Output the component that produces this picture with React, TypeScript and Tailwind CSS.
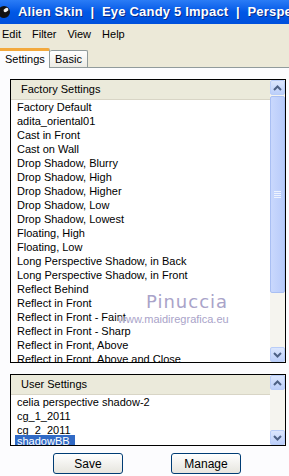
import React from 'react';

const factory = [
  'Factory Default',
  'adita_oriental01',
  'Cast in Front',
  'Cast on Wall',
  'Drop Shadow, Blurry',
  'Drop Shadow, High',
  'Drop Shadow, Higher',
  'Drop Shadow, Low',
  'Drop Shadow, Lowest',
  'Floating, High',
  'Floating, Low',
  'Long Perspective Shadow, in Back',
  'Long Perspective Shadow, in Front',
  'Reflect Behind',
  'Reflect in Front',
  'Reflect in Front - Faint',
  'Reflect in Front - Sharp',
  'Reflect in Front, Above',
  'Reflect in Front, Above and Close',
];

const user = ['celia perspective shadow-2', 'cg_1_2011', 'cg_2_2011'];

function Arrow({ up }: { up?: boolean }) {
  return (
    <svg width="9" height="6" viewBox="0 0 9 6">
      <path
        d={up ? 'M1 5 L4.5 1.5 L8 5' : 'M1 1 L4.5 4.5 L8 1'}
        fill="none"
        stroke="#4d6185"
        strokeWidth="2"
      />
    </svg>
  );
}

function ScrollBtn({ up }: { up?: boolean }) {
  return (
    <div className="h-[15px] w-[15px] flex items-center justify-center rounded-[2px] border border-[#b9cdf8] bg-gradient-to-b from-[#dbe6fd] to-[#bccffa]">
      <Arrow up={up} />
    </div>
  );
}

function Scrollbar({ thumb, track }: { thumb: number; track: number }) {
  return (
    <div className="w-[15px] flex flex-col bg-[#f4f3ee]">
      <ScrollBtn up />
      {thumb > 0 && (
        <div
          className="mt-[1px] w-[15px] rounded-[2px] border border-[#a9bff3] bg-gradient-to-r from-[#c9d8fd] to-[#b8cbfa] flex items-center justify-center"
          style={{ height: thumb }}
        >
          <div className="flex flex-col gap-[1px]">
            <div className="h-px w-[7px] bg-[#eef3fe]" />
            <div className="h-px w-[7px] bg-[#eef3fe]" />
            <div className="h-px w-[7px] bg-[#eef3fe]" />
            <div className="h-px w-[7px] bg-[#eef3fe]" />
          </div>
        </div>
      )}
      <div className="bg-[#f5f4ef]" style={{ height: track }} />
      <ScrollBtn />
    </div>
  );
}

export default function App() {
  return (
    <div className="relative w-[289px] h-[476px] overflow-hidden bg-[#ece9d8] text-[11px] text-black font-['Liberation_Sans',Arial,sans-serif]">
      {/* title bar */}
      <div className="h-[24px] flex items-center bg-gradient-to-b from-[#2a7cf6] via-[#0058e6] to-[#0050dc] whitespace-nowrap overflow-hidden">
        <svg width="14" height="14" viewBox="0 0 14 14" className="ml-[-3px] shrink-0">
          <circle cx="7" cy="7" r="6" fill="#111" />
          <ellipse cx="9" cy="5" rx="2.6" ry="1.8" fill="#eee" transform="rotate(-30 9 5)" />
        </svg>
        <span className="ml-[7px] text-white font-bold text-[13px] tracking-[0.2px] [text-shadow:1px_1px_0_#0a2a8a]">
          Alien Skin&nbsp;&nbsp;|&nbsp;&nbsp;Eye Candy 5 Impact&nbsp;&nbsp;|&nbsp;&nbsp;Perspective Shadow
        </span>
      </div>

      {/* menu */}
      <div className="h-[20px] flex items-center gap-[11px] pl-[2px]">
        <span>Edit</span>
        <span>Filter</span>
        <span>View</span>
        <span>Help</span>
      </div>

      {/* tabs */}
      <div className="h-[23px] flex items-end bg-[#ece9d8]">
        <div className="relative z-10 h-[20px] w-[50px] mb-[-1px] bg-[#fcfcfe] border-r border-[#919b9c] border-t-[3px] border-t-[#f3a93d] flex items-center pl-[5px] rounded-tr-[2px]">
          Settings
        </div>
        <div className="h-[17px] w-[38px] border border-b-0 border-l-0 border-[#919b9c] bg-gradient-to-b from-white to-[#ecebe5] flex items-center pl-[5px] rounded-t-[2px]">
          Basic
        </div>
      </div>

      {/* panel */}
      <div className="border-t border-[#919b9c] bg-[#fcfcfe] h-[409px] pt-[11px]">
        <div className="ml-[10px] w-[276px] h-[284px] border border-black flex bg-white">
          <div className="flex-1 flex flex-col overflow-hidden">
            <div className="h-[20px] shrink-0 bg-[#ebeadb] border-b border-[#d8d5c6] flex items-center pl-[10px]">
              Factory Settings
            </div>
            {factory.map(f => (
              <div key={f} className="h-[14px] shrink-0 leading-[14px] pl-[6px] whitespace-nowrap">
                {f}
              </div>
            ))}
          </div>
          <Scrollbar thumb={197} track={54} />
        </div>

        <div className="mt-[11px] ml-[10px] w-[276px] h-[72px] border border-black flex bg-white">
          <div className="flex-1 flex flex-col overflow-hidden">
            <div className="h-[20px] shrink-0 bg-[#ebeadb] border-b border-[#d8d5c6] flex items-center pl-[10px]">
              User Settings
            </div>
            {user.map(u => (
              <div key={u} className="h-[14px] shrink-0 leading-[14px] pl-[6px] whitespace-nowrap">
                {u}
              </div>
            ))}
            <div className="relative h-[14px] shrink-0 mt-[-2px] leading-[12px] pl-[4px]">
              <span className="inline-block bg-[#316ac5] text-white px-[2px] pr-[5px]">shadowBB</span>
            </div>
          </div>
          <Scrollbar thumb={0} track={40} />
        </div>

        <div className="mt-[7px] flex pl-[53px] gap-[48px]">
          <button className="w-[70px] h-[21px] rounded-[3px] border border-[#003c74] bg-gradient-to-b from-white to-[#e6e5de] text-[12px]">
            Save
          </button>
          <button className="w-[70px] h-[21px] rounded-[3px] border border-[#003c74] bg-gradient-to-b from-white to-[#e6e5de] text-[12px]">
            Manage
          </button>
        </div>
      </div>

      {/* watermark */}
      <div className="absolute left-[146px] top-[288px] text-[18px] tracking-[1px] text-[#a9a3c9] font-['DejaVu_Sans',sans-serif] [text-shadow:0_0_2px_white]">
        Pinuccia
      </div>
      <div className="absolute left-[118px] top-[311px] text-[11px] text-[#a9a3c9] [text-shadow:0_0_2px_white] whitespace-nowrap">
        www.maidiregrafica.eu
      </div>
    </div>
  );
}
